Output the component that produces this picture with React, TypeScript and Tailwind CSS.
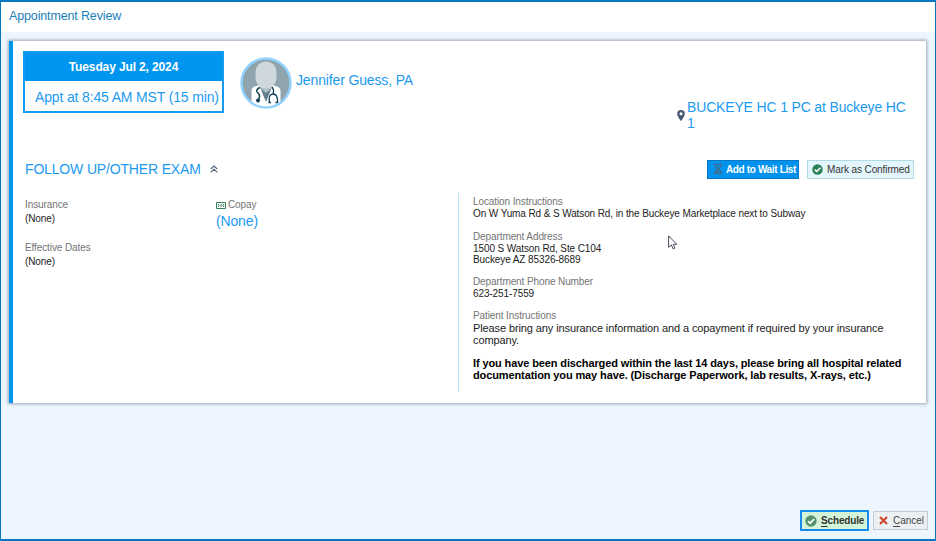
import type { ReactNode } from "react";

function Avatar() {
  return (
    <svg className="ml-4 mt-1.5 h-[52px] w-[52px] shrink-0" viewBox="0 0 52 52">
      <defs>
        <clipPath id="face">
          <circle cx="26" cy="26" r="23.5" />
        </clipPath>
      </defs>
      <circle cx="26" cy="26" r="24.5" fill="#90a4ae" stroke="#90d2ff" strokeWidth="2.4" />
      <g clipPath="url(#face)">
        <path d="M11.500 52V34q0-4 5-5l5-1.500h9l5 1.500q5 1 5 5v18z" fill="#fff" />
        <path d="M20 30h12l-6 15z" fill="#607d8b" />
        <path d="M20 28h12v3l-6 5-6-5z" fill="#b0bec5" />
        <rect x="15.500" y="4.500" width="21" height="27" rx="10.500" fill="#cfd8dc" />
        <path d="M20 30.500q-4 1.500-3 4.500 3 2 2.500 5l-1.500 4" fill="none" stroke="#123f55" strokeWidth="1.500" />
        <circle cx="18" cy="43.500" r="2" fill="#123f55" />
        <path d="M32 30q2.500 3 1 7M29.500 45.500q-1.500-8.500 3.500-8.500t4.500 8.500M28.500 45.500h2.500M35.500 45.500h2.500" fill="none" stroke="#123f55" strokeWidth="1.300" />
      </g>
    </svg>
  );
}

function Pin() {
  return (
    <svg className="mt-[11px] h-[11px] w-2 shrink-0" viewBox="0 0 8 11">
      <path fillRule="evenodd" fill="#455a70" d="M4 0a3.800 3.800 0 0 0-3.800 3.900C.2 6.300 4 11 4 11s3.800-4.700 3.800-7.100A3.800 3.800 0 0 0 4 0zm0 5.300a1.500 1.500 0 1 1 0-3 1.500 1.500 0 0 1 0 3z" />
    </svg>
  );
}

function Check({ size, color }: { size: number; color: string }) {
  return (
    <svg width={size} height={size} viewBox="0 0 12 12" className="shrink-0">
      <circle cx="6" cy="6" r="5.700" fill={color} />
      <path d="M3 6.100l2.200 2.100L9.200 4" fill="none" stroke="#fff" strokeWidth="1.700" />
    </svg>
  );
}

function Field({ label, className = "", children }: { label: ReactNode; className?: string; children: ReactNode }) {
  return (
    <div className={className}>
      <div className="whitespace-nowrap text-[10px] leading-3 tracking-[-0.1px] text-[#747474]">{label}</div>
      {children}
    </div>
  );
}

export default function App() {
  return (
    <div className="flex h-[541px] w-[936px] flex-col border-x border-b-2 border-t-2 border-[#0877bd] bg-[#edf5fe] font-['Liberation_Sans',Arial,sans-serif] text-[#222]">
      <header className="h-[30px] shrink-0 bg-white pl-2 pt-1.5 text-[12.500px] leading-4 tracking-[-0.14px] text-[#1b7fbb]">Appointment Review</header>

      <main className="ml-2 mr-[9px] mt-[9px] h-[362px] shrink-0 border-l-4 border-[#0095ef] bg-white shadow-[0_0_3px_1px_#9aa6b5]">
        <div className="flex h-[109px] pl-2.5 pt-2.5">
          <div className="h-[62px] w-[201px] shrink-0 border-2 border-[#129bf0] bg-white">
            <div className="h-7 bg-[#0095ef] text-center text-[12px] font-bold leading-[28px] tracking-[-0.13px] text-white">
              Tuesday Jul 2, 2024
            </div>
            <div className="whitespace-nowrap pl-2.5 pt-2 text-[14px] leading-4 tracking-[-0.15px] text-[#1c9af0]">Appt at 8:45 AM MST (15 min)</div>
          </div>
          <Avatar />
          <div className="ml-1 mt-[21px] w-[381px] text-[14px] leading-4 tracking-[-0.14px] text-[#1c9af0]">Jennifer Guess, PA</div>
          <div className="mt-12 flex">
            <Pin />
            <div className="ml-0.5 w-[225px] text-[14px] leading-4 tracking-[-0.16px] text-[#1c9af0]">BUCKEYE HC 1 PC at Buckeye HC 1</div>
          </div>
        </div>

        <div className="mt-[9px] flex h-5 items-center pl-3 pr-3">
          <div className="text-[14px] leading-5 tracking-[-0.16px] text-[#1c9af0]">FOLLOW UP/OTHER EXAM</div>
          <svg className="ml-[9px] h-2 w-2" viewBox="0 0 8 8" fill="none" stroke="#50657c" strokeWidth="1.100">
            <path d="M.7 4L4 1l3.300 3M.7 7.300L4 4.300l3.300 3" />
          </svg>
          <button className="ml-auto flex h-[19px] w-[92px] items-center border border-[#0878c2] bg-[#0092ec] pl-1.5 text-[10px] font-bold text-white">
            <svg className="mr-1 h-2.5 w-2 shrink-0" viewBox="0 0 8 10" fill="none" stroke="#4b687f" strokeWidth="1.100">
              <path d="M0 .6h8M0 9.400h8M1.300 1v1.500L4 5 1.300 7.500V9M6.700 1v1.500L4 5l2.700 2.500V9M2.500 8h3" />
            </svg>
            <span className="whitespace-nowrap tracking-[-0.36px]">Add to Wait List</span>
          </button>
          <button className="ml-2 flex h-[19px] w-[107px] items-center border border-[#b0dbe6] bg-[#e3f6fc] pl-1 text-[10px] tracking-[-0.1px] text-[#333]">
            <Check size={11} color="#2d8158" />
            <span className="ml-1 whitespace-nowrap">Mark as Confirmed</span>
          </button>
        </div>

        <div className="mt-3.5 flex">
          <div className="h-[199px] w-[446px] border-r border-[#b8e3fb] pl-3">
            <div className="flex pt-1.5">
              <Field label="Insurance" className="w-[191px]">
                <div className="mt-0.5 text-[10px] leading-3 tracking-[-0.1px]">(None)</div>
              </Field>
              <Field
                label={
                  <span className="flex items-center">
                    <svg className="mr-0.5 mt-px h-[7px] w-[10px]" viewBox="0 0 10 7" fill="none" stroke="#367e5c" strokeWidth="1">
                      <path d="M.5.5h9v6h-9zM2 2l1 1.500L2 5M8 2L7 3.500 8 5M5 2v3" />
                    </svg>
                    Copay
                  </span>
                }
              >
                <div className="text-[14px] leading-[21px] tracking-[-0.15px] text-[#1c9af0]">(None)</div>
              </Field>
            </div>
            <Field label="Effective Dates" className="mt-2.5">
              <div className="mt-0.5 text-[10px] leading-3 tracking-[-0.1px]">(None)</div>
            </Field>
          </div>

          <div className="relative w-[455px] pl-3.5 pt-[3px]">
            <Field label="Location Instructions">
              <div className="whitespace-nowrap text-[10px] leading-3 tracking-[-0.105px]">
                On W Yuma Rd &amp; S Watson Rd, in the Buckeye Marketplace next to Subway
              </div>
            </Field>
            <Field label="Department Address" className="mt-[11px]">
              <div className="text-[10px] leading-[11px] tracking-[-0.1px]">
                1500 S Watson Rd, Ste C104
                <br />
                Buckeye AZ 85326-8689
              </div>
            </Field>
            <Field label="Department Phone Number" className="mt-[11px]">
              <div className="text-[10px] leading-3 tracking-[-0.1px]">623-251-7559</div>
            </Field>
            <Field label="Patient Instructions" className="mt-2.5">
              <div className="whitespace-nowrap text-[11px] leading-3 tracking-[-0.108px]">
                Please bring any insurance information and a copayment if required by your insurance
                <br />
                company.
              </div>
              <div className="mt-[11px] whitespace-nowrap text-[11px] font-bold leading-3 tracking-[-0.115px] text-black">
                If you have been discharged within the last 14 days, please bring all hospital related
                <br />
                documentation you may have. (Discharge Paperwork, lab results, X-rays, etc.)
              </div>
            </Field>
            <svg className="absolute left-[209px] top-[42px] h-[15px] w-2.5" viewBox="0 0 10 15">
              <path d="M.6.900v11.500l2.700-2.500 1.800 4 1.900-.9-1.800-3.700h3.600z" fill="#fff" stroke="#333748" strokeWidth=".9" />
            </svg>
          </div>
        </div>
      </main>

      <footer className="mb-2 mr-[7px] mt-auto flex items-center justify-end">
        <button className="flex h-[21px] w-[69px] items-center border-2 border-[#168cee] bg-[#d4f4d8] pl-[3px] text-[10px] font-bold tracking-[-0.15px] text-[#333]">
          <Check size={12} color="#55936e" />
          <span className="ml-1">
            <span className="underline underline-offset-2">S</span>chedule
          </span>
        </button>
        <button className="ml-1 flex h-[19px] w-[55px] items-center border border-[#c5cbd0] bg-[#edf0f3] pl-[5px] text-[10px] tracking-[-0.05px] text-[#444]">
          <svg className="h-[9px] w-[9px] shrink-0" viewBox="0 0 9 9">
            <path d="M1 1l7 7M8 1L1 8" stroke="#cc4429" strokeWidth="2" />
          </svg>
          <span className="ml-[5px]">
            <span className="underline underline-offset-2">C</span>ancel
          </span>
        </button>
      </footer>
    </div>
  );
}
